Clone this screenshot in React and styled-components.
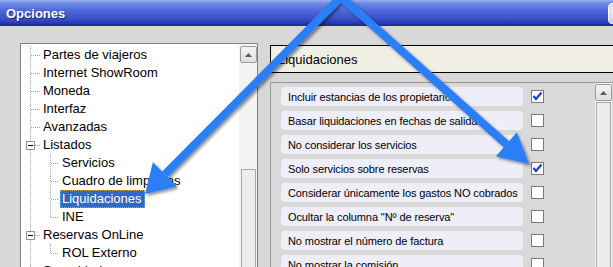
import React from "react";
import styled, { createGlobalStyle } from "styled-components";

const GlobalStyle = createGlobalStyle`
	html, body {
		margin: 0;
		padding: 0;
		background: #d8d8d8;
		overflow: hidden;
	}
	* {
		box-sizing: border-box;
	}
`;

const Screen = styled.div`
	position: relative;
	width: 613px;
	height: 267px;
	overflow: hidden;
`;

const Window = styled.div`
	width: 634px;
	height: 267px;
	display: flex;
	flex-direction: column;
	background: #d8d8d8;
	font-family: "Liberation Sans", Arial, sans-serif;
`;

const TitleBar = styled.div`
	height: 26px;
	flex: none;
	display: flex;
	align-items: center;
	justify-content: space-between;
	padding: 0 5px 0 6px;
	background: linear-gradient(
		to bottom,
		#9ab0f0 0%,
		#6f8ce4 12%,
		#4d69d8 40%,
		#3a53c9 70%,
		#2637b0 90%,
		#1b2794 100%
	);
	color: #fff;
	font-size: 13px;
	font-weight: bold;
	text-shadow: 1px 1px 0 #1a2a80;
`;

const CloseButton = styled.div`
	width: 21px;
	height: 21px;
	border-radius: 4px;
	border: 1px solid #fff;
	background: radial-gradient(circle at 35% 35%, #f7f9ff 0%, #c9d4f6 60%, #8fa4e6 100%);
`;

const Body = styled.div`
	flex: 1;
	display: flex;
	gap: 12px;
	padding: 17px 0 0 20px;
	overflow: hidden;
`;

const TreePanel = styled.div`
	width: 238px;
	height: 260px;
	flex: none;
	display: flex;
	border: 1px solid #828282;
	background: #fff;
`;

const TreeList = styled.div`
	flex: 1;
	padding-top: 2px;
	font-size: 13px;
	color: #000;
`;

const TreeRow = styled.div`
	height: 18px;
	display: flex;
	align-items: center;
`;

const TreeLabel = styled.span`
	height: 18px;
	line-height: 16px;
	padding: 0 2px 0 1px;
	white-space: nowrap;
	border: 1px ${(p) => (p.$selected ? "dotted #c9a648" : "solid transparent")};
	background: ${(p) => (p.$selected ? "#316ac5" : "transparent")};
	color: ${(p) => (p.$selected ? "#fff" : "#000")};
`;

const ScrollTrack = styled.div`
	width: ${(p) => p.$width}px;
	flex: none;
	display: flex;
	flex-direction: column;
	align-items: center;
	padding-top: ${(p) => p.$top}px;
	background: #f3f3f1;
`;

const ScrollButton = styled.div`
	width: 17px;
	height: 17px;
	flex: none;
	display: flex;
	align-items: center;
	justify-content: center;
	border: 1px solid #9c9c9c;
	border-radius: 2px;
	background: linear-gradient(to bottom, #f4f4f4, #dedede);
`;

const ScrollThumb = styled.div`
	width: 15px;
	flex: 1;
	margin-top: ${(p) => p.$gap}px;
	border: 1px solid #a8a8a8;
	border-bottom: none;
	background: #ececec;
`;

const RightColumn = styled.div`
	flex: 1;
	display: flex;
	flex-direction: column;
	padding-top: 2px;
`;

const SectionHeader = styled.div`
	height: 28px;
	flex: none;
	display: flex;
	align-items: center;
	padding-left: 7px;
	border: 1px solid #000;
	border-right: none;
	background: #f1efe3;
	font-size: 13px;
	color: #000;
`;

const OptionsPanel = styled.div`
	margin-top: 9px;
	flex: 1;
	display: flex;
	border: 1px solid #979797;
	border-right: none;
	background: #d9d9d9;
`;

const OptionsList = styled.div`
	width: 324px;
	flex: none;
	display: flex;
	flex-direction: column;
	gap: 5px;
	padding: 4px 0 0 10px;
`;

const OptionRow = styled.div`
	height: 19px;
	flex: none;
	display: flex;
	align-items: center;
`;

const OptionLabel = styled.div`
	width: 242px;
	height: 19px;
	display: flex;
	align-items: center;
	padding-left: 7px;
	border-radius: 4px;
	background: #eeeef9;
	font-size: 11px;
	letter-spacing: -0.1px;
	color: #000;
	white-space: nowrap;
	overflow: hidden;
`;

const CheckBox = styled.div`
	width: 13px;
	height: 13px;
	margin-left: 8px;
	flex: none;
	display: flex;
	align-items: center;
	justify-content: center;
	border: 1px solid #7a7a7a;
	background: #fff;
`;

const ArrowLayer = styled.svg`
	position: absolute;
	left: 0;
	top: 0;
	pointer-events: none;
`;

const treeItems = [
	{ label: "Partes de viajeros", level: 1 },
	{ label: "Internet ShowRoom", level: 1 },
	{ label: "Moneda", level: 1 },
	{ label: "Interfaz", level: 1 },
	{ label: "Avanzadas", level: 1 },
	{ label: "Listados", level: 1, expander: true },
	{ label: "Servicios", level: 2 },
	{ label: "Cuadro de limpiezas", level: 2 },
	{ label: "Liquidaciones", level: 2, selected: true },
	{ label: "INE", level: 2, last: true },
	{ label: "Reservas OnLine", level: 1, expander: true },
	{ label: "ROL Externo", level: 2, last: true },
	{ label: "Seguridad", level: 1 },
];

const options = [
	{ label: "Incluir estancias de los propietarios", checked: true },
	{ label: "Basar liquidaciones en fechas de salida" },
	{ label: "No considerar los servicios" },
	{ label: "Solo servicios sobre reservas", checked: true },
	{ label: "Considerar únicamente los gastos NO cobrados" },
	{ label: 'Ocultar la columna "Nº de reserva"' },
	{ label: "No mostrar el número de factura" },
	{ label: "No mostrar la comisión" },
];

const dot = { stroke: "#a0a0a0", strokeWidth: 1, strokeDasharray: "1 1", shapeRendering: "crispEdges" };

function Connector({ level, expander, last }) {
	const width = level === 1 ? 20 : 39;
	return (
		<svg width={width} height="18" style={{ flex: "none" }}>
			<line x1="9.5" y1="0" x2="9.5" y2="18" {...dot} />
			{level === 1 && !expander && <line x1="10" y1="9.5" x2="19" y2="9.5" {...dot} />}
			{level === 1 && expander && (
				<>
					<line x1="14" y1="9.5" x2="19" y2="9.5" {...dot} />
					<rect x="5.5" y="5.5" width="8" height="8" fill="#fff" stroke="#949494" shapeRendering="crispEdges" />
					<line x1="7" y1="9.5" x2="12" y2="9.5" stroke="#000" shapeRendering="crispEdges" />
				</>
			)}
			{level === 2 && (
				<>
					<line x1="29.5" y1="0" x2="29.5" y2={last ? 9.5 : 18} {...dot} />
					<line x1="30" y1="9.5" x2="38" y2="9.5" {...dot} />
				</>
			)}
		</svg>
	);
}

function UpArrow() {
	return (
		<svg width="7" height="4" viewBox="0 0 7 4">
			<path d="M0 4 L3.5 0 L7 4 Z" fill="#5c5c5c" />
		</svg>
	);
}

function Check() {
	return (
		<svg width="11" height="11" viewBox="0 0 11 11">
			<polyline points="1.5,5 4,8 9.5,1.5" fill="none" stroke="#1f3fd0" strokeWidth="2.2" />
		</svg>
	);
}

function Arrows() {
	return (
		<ArrowLayer width="613" height="267">
			<defs>
				<filter id="shadow" x="-20%" y="-20%" width="140%" height="140%">
					<feDropShadow dx="2" dy="2" stdDeviation="1.6" floodColor="#000" floodOpacity="0.45" />
				</filter>
			</defs>
			<g filter="url(#shadow)">
				<path
					d="M164.9 174.3 L341 -3 L506.4 144.3"
					fill="none"
					stroke="#2b7ff7"
					strokeWidth="8"
					strokeLinejoin="miter"
				/>
				<polygon points="145,194 152.9,162.2 176.9,186.4" fill="#2b7ff7" />
				<polygon points="529,164 516.9,132.3 495.9,156.3" fill="#2b7ff7" />
			</g>
		</ArrowLayer>
	);
}

export default function App() {
	return (
		<Screen>
			<GlobalStyle />
			<Window>
				<TitleBar>
					<span>Opciones</span>
					<CloseButton />
				</TitleBar>
				<Body>
					<TreePanel>
						<TreeList>
							{treeItems.map((item) => (
								<TreeRow key={item.label}>
									<Connector level={item.level} expander={item.expander} last={item.last} />
									<TreeLabel $selected={item.selected}>{item.label}</TreeLabel>
								</TreeRow>
							))}
						</TreeList>
						<ScrollTrack $width={18} $top={2}>
							<ScrollButton>
								<UpArrow />
							</ScrollButton>
							<ScrollThumb $gap={106} />
						</ScrollTrack>
					</TreePanel>
					<RightColumn>
						<SectionHeader>Liquidaciones</SectionHeader>
						<OptionsPanel>
							<OptionsList>
								{options.map((o) => (
									<OptionRow key={o.label}>
										<OptionLabel>{o.label}</OptionLabel>
										<CheckBox>{o.checked && <Check />}</CheckBox>
									</OptionRow>
								))}
							</OptionsList>
							<ScrollTrack $width={17} $top={1}>
								<ScrollButton>
									<UpArrow />
								</ScrollButton>
								<ScrollThumb $gap={1} />
							</ScrollTrack>
						</OptionsPanel>
					</RightColumn>
				</Body>
			</Window>
			<Arrows />
		</Screen>
	);
}
